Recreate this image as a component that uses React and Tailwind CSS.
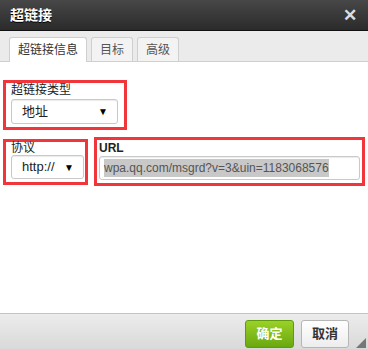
const cjk = { fontFamily: '"Liberation Sans", "Noto Sans CJK SC", sans-serif' };

const SelectBox = ({ value, width, height }) => (
  <div
    className={`${width} ${height} flex items-center justify-between pl-[10px] pr-[9px] bg-white border border-[#c9c9c9] rounded-[3px] shadow-[inset_0_1px_1px_rgba(0,0,0,0.08)] text-[13px] text-[#222]`}
  >
    <span>{value}</span>
    <span className="text-[10px] text-black">▼</span>
  </div>
);

const App = () => {
  return (
    <div className="relative w-[368px] h-[349px] flex flex-col bg-white overflow-hidden" style={cjk}>
      {/* title bar */}
      <div className="h-[31px] flex items-center justify-between px-[10px] bg-gradient-to-b from-[#474747] to-[#2b2b2b] border-b border-[#111]">
        <span className="text-[14px] font-bold text-white [text-shadow:0_1px_0_#000]">超链接</span>
        <span className="text-[17px] font-bold text-[#ddd] leading-none mr-[1px]">✕</span>
      </div>

      {/* tabs */}
      <div className="h-[31px] flex items-end gap-[4px] pl-[9px] bg-[#ebebeb] border-b border-[#cfcfcf]">
        <div className="h-[25px] px-[8px] flex items-center bg-white border border-b-0 border-[#cfcfcf] rounded-t-[3px] mb-[-1px] text-[12px] text-[#333]">
          超链接信息
        </div>
        <div className="h-[24px] px-[8px] flex items-center bg-[#f3f3f3] border border-b-0 border-[#cfcfcf] rounded-t-[3px] text-[12px] text-[#555]">
          目标
        </div>
        <div className="h-[24px] px-[8px] flex items-center bg-[#f3f3f3] border border-b-0 border-[#cfcfcf] rounded-t-[3px] text-[12px] text-[#555]">
          高级
        </div>
      </div>

      {/* body */}
      <div className="flex-1 flex flex-col gap-[7px] pt-[18px] pl-[3px] pr-[3px]">
        <div className="w-[124px] border-[3px] border-[#f0363a] pb-[3px] pl-[5px]">
          <div className="text-[12px] leading-[14px] text-[#222] mb-[2px]">超链接类型</div>
          <SelectBox value="地址" width="w-[107px]" height="h-[25px]" />
        </div>

        <div className="flex items-start gap-[6px]">
          <div className="w-[85px] mt-[2px] border-[3px] border-[#f0363a] pb-[3px] pl-[5px]">
            <div className="text-[12px] leading-[13px] text-[#222]">协议</div>
            <SelectBox value="http://" width="w-[73px]" height="h-[24px]" />
          </div>
          <div className="w-[271px] border-[3px] border-[#f0363a] pt-[2px] pb-[3px] pl-[2px]">
            <div className="text-[12px] leading-[13px] font-bold text-[#222] mb-[1px]">URL</div>
            <div className="w-[261px] h-[24px] flex items-center px-[4px] bg-white border border-[#c9c9c9] rounded-[3px] shadow-[inset_0_1px_1px_rgba(0,0,0,0.08)]">
              <span className="bg-[#c8c8c8] text-[12px] text-[#555]">wpa.qq.com/msgrd?v=3&amp;uin=1183068576</span>
            </div>
          </div>
        </div>
      </div>

      {/* footer */}
      <div className="h-[36px] flex items-start justify-end gap-[7px] pt-[6px] pr-[19px] bg-gradient-to-b from-[#ececec] to-[#d9d9d9] border-t border-[#c4c4c4]">
        <div className="w-[49px] h-[28px] flex items-center justify-center rounded-[3px] border border-[#5e9a0e] bg-gradient-to-b from-[#9bd127] to-[#69a80f] text-white text-[13px] font-bold">
          确定
        </div>
        <div className="w-[48px] h-[28px] flex items-center justify-center rounded-[3px] border border-[#b6b6b6] bg-gradient-to-b from-white to-[#ededed] text-[#333] text-[13px] font-bold">
          取消
        </div>
      </div>

      <div className="absolute right-[2px] bottom-[1px] w-0 h-0 border-l-[10px] border-l-transparent border-b-[10px] border-b-[#777]" />
    </div>
  );
};

export default App;
